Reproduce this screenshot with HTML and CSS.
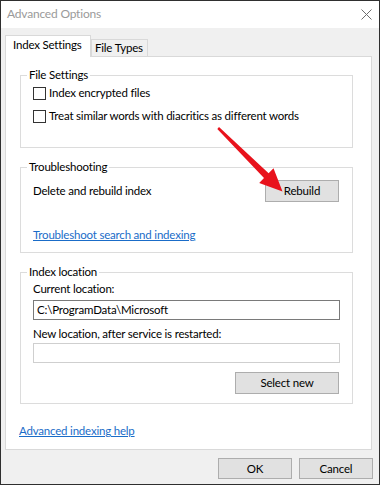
FILE: index.html
```html
<!DOCTYPE html>
<html>
<head>
<meta charset="utf-8">
<link rel="stylesheet" href="styles.css">
</head>
<body>
<div class="window">
  <div class="titlebar">
    <span class="title">Advanced Options</span>
    <svg class="close" width="11" height="11" viewBox="0 0 11 11"><path d="M0.5 0.5 L10.5 10.5 M10.5 0.5 L0.5 10.5" stroke="#6e6e6e" stroke-width="1" fill="none"/></svg>
  </div>
  <div class="body">
    <div class="tabs">
      <div class="tab active">Index Settings</div>
      <div class="tab">File Types</div>
    </div>
    <div class="panel">
      <fieldset class="group g1">
        <legend>File Settings</legend>
        <label class="check"><span class="box"></span>Index encrypted files</label>
        <label class="check second"><span class="box"></span>Treat similar words with diacritics as different words</label>
      </fieldset>
      <fieldset class="group g2">
        <legend>Troubleshooting</legend>
        <div class="row">
          <span>Delete and rebuild index</span>
          <button class="btn btn-rebuild">Rebuild</button>
        </div>
        <a class="link trouble">Troubleshoot search and indexing</a>
      </fieldset>
      <fieldset class="group g3">
        <legend>Index location</legend>
        <div class="field-label">Current location:</div>
        <div class="textbox">C:\ProgramData\Microsoft</div>
        <div class="field-label second-label">New location, after service is restarted:</div>
        <div class="textbox empty"></div>
        <div class="row end"><button class="btn btn-select">Select new</button></div>
      </fieldset>
      <a class="link help">Advanced indexing help</a>
    </div>
    <div class="footer">
      <button class="btn btn-foot">OK</button>
      <button class="btn btn-foot">Cancel</button>
    </div>
  </div>
  <svg class="arrow" width="380" height="485" viewBox="0 0 380 485">
    <polygon points="219,127 268.6,173.3 273.5,168.3 282.5,191.5 259.2,182.9 264,177.9 217.3,129" fill="#e8121c"/>
  </svg>
</div>
</body>
</html>
```
FILE: styles.css
```css
* { box-sizing: border-box; }
html, body { margin: 0; padding: 0; background: #fff; }
.window {
  position: relative;
  width: 380px;
  height: 485px;
  border: 1px solid #2f2f2f;
  background: #f0f0f0;
  font-family: Lato, "Noto Sans", sans-serif;
  font-size: 11.5px;
  letter-spacing: -0.2px;
  line-height: 16px;
  color: #000;
  overflow: hidden;
  white-space: nowrap;
}
.titlebar {
  height: 27px;
  background: #fff;
  display: flex;
  justify-content: space-between;
  align-items: flex-start;
  padding: 5px 7px 0 6px;
}
.title { color: #9a9a9a; font-size: 12px; }
.close { margin-top: 3px; }
.body { padding: 7px 7px 0 4px; }
.tabs {
  display: flex;
  align-items: flex-end;
  height: 21px;
  position: relative;
  z-index: 1;
}
.tab {
  border: 1px solid #d9d9d9;
  border-bottom: none;
  background: #f0f0f0;
  padding: 0 4px 0 3px;
  height: 17px;
  line-height: 16px;
}
.tab.active {
  background: #fff;
  height: 22px;
  padding: 1px 7px 0 7px;
  margin-bottom: -1px;
  width: 86px;
}
.panel {
  background: #fff;
  border: 1px solid #d9d9d9;
  height: 394px;
  padding: 10px 18px 0 14px;
}
.group {
  margin: 0;
  border: 1px solid #dcdcdc;
  padding: 0 12px;
  min-width: 0;
}
.group legend {
  padding: 0 2px;
  margin-left: -6px;
  line-height: 16px;
}
.g1 { padding-bottom: 21px; }
.g2 { margin-top: 11px; padding-bottom: 9px; }
.g3 { margin-top: 11px; padding-bottom: 9px; }
.check {
  display: flex;
  align-items: center;
  height: 20px;
}
.check.second { margin-top: 3px; }
.box {
  width: 13px;
  height: 13px;
  border: 1px solid #333;
  background: #fff;
  margin-right: 3px;
  flex: none;
}
.row {
  display: flex;
  align-items: center;
  justify-content: space-between;
  margin-top: 5px;
}
.row.end { justify-content: flex-end; margin-top: 9px; }
.btn {
  font-family: inherit;
  font-size: inherit;
  letter-spacing: inherit;
  line-height: 16px;
  background: #e1e1e1;
  border: 1px solid #adadad;
  color: #000;
  padding: 0;
  margin: 0;
  height: 22px;
}
.btn-rebuild { width: 74px; margin-right: 1px; }
.btn-select { width: 104px; margin-right: 1px; }
.link {
  display: block;
  color: #1a6cc8;
  text-decoration: underline;
  width: max-content;
}
.trouble { margin-top: 25px; }
.field-label { margin-top: 1px; }
.second-label { margin-top: 6px; }
.textbox {
  margin-top: 3px;
  height: 20px;
  border: 1px solid #7a7a7a;
  padding: 1px 3px;
  line-height: 16px;
}
.textbox.empty { margin-top: 1px; border-color: #cfcfcf; }
.help { margin-top: 19px; margin-left: -1px; }
.footer {
  display: flex;
  justify-content: flex-end;
  gap: 7px;
  margin-top: 8px;
  margin-right: -1px;
}
.btn-foot { width: 74px; height: 21px; }
.arrow {
  position: absolute;
  left: -1px;
  top: -1px;
  pointer-events: none;
}
```
